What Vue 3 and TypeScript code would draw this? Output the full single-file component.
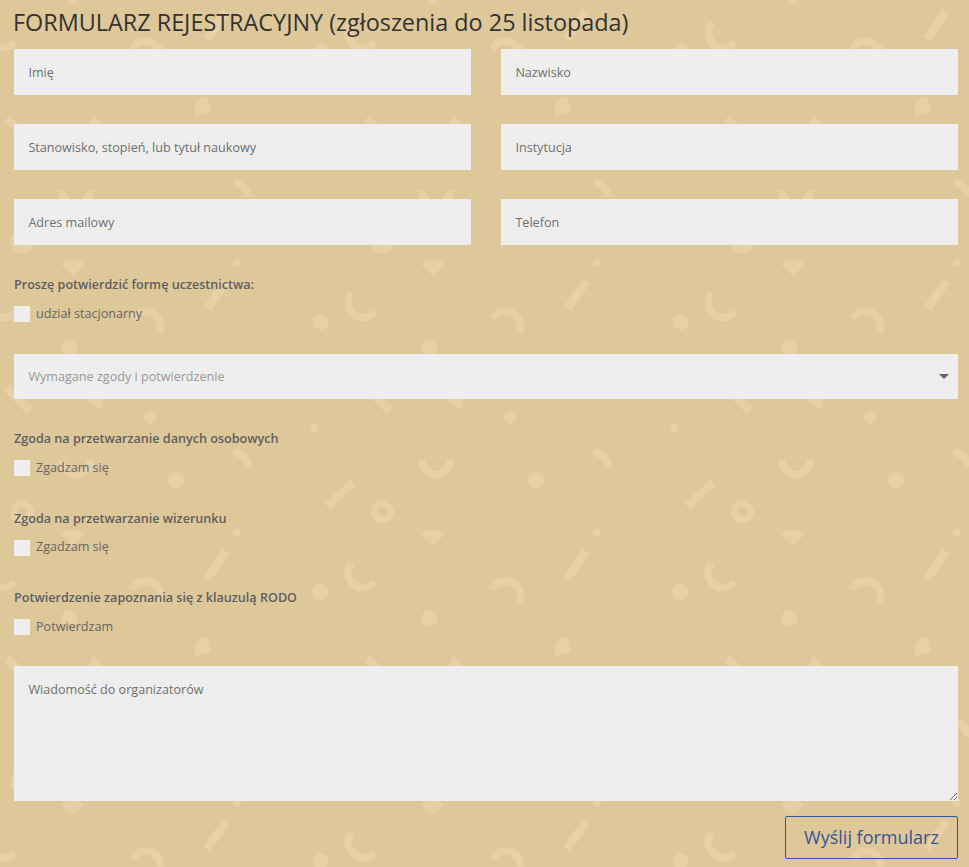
<script setup lang="ts">
const consentGroups = [
  { title: 'Zgoda na przetwarzanie danych osobowych', label: 'Zgadzam się' },
  { title: 'Zgoda na przetwarzanie wizerunku', label: 'Zgadzam się' },
  { title: 'Potwierdzenie zapoznania się z klauzulą RODO', label: 'Potwierdzam' },
]
const fields: string[] = ['Imię', 'Nazwisko', 'Stanowisko, stopień, lub tytuł naukowy', 'Instytucja', 'Adres mailowy', 'Telefon']
</script>

<template>
  <div class="page">
    <svg class="pattern" width="969" height="867" aria-hidden="true">
      <defs>
        <pattern id="confetti" patternUnits="userSpaceOnUse" width="360" height="270" patternTransform="translate(280 258)">
          <g transform="translate(-280 -258)" fill="#e8cfa5" stroke="none">
            <circle cx="596.7" cy="262.7" r="4" />
            <path d="M421.5 264.5 A17 17 0 0 1 444.5 264.5 L433 276 Z" />
            <circle cx="320.7" cy="321.7" r="8" />
            <circle cx="429.3" cy="348.3" r="8" />
            <circle cx="510" cy="417.7" r="6" />
            <circle cx="314" cy="428" r="4.3" />
            <circle cx="536" cy="480.7" r="8" />
            <path d="M571 381.7 L555 386 A16.6 16.6 0 0 1 566.7 366 Z" />
            <path d="M446 401 L453 386 A16.7 16.7 0 0 1 461 409 Z" />
            <g fill="none" stroke="#e8cfa5" stroke-width="7.5">
              <path d="M586 281.5 L567 309" stroke-width="8.5" />
              <path d="M492.5 319 A14.5 14.5 0 0 1 519 333" />
              <path d="M351.5 293 A14.5 14.5 0 0 0 375 312" />
              <path d="M367 388 L390 411" stroke-width="8.5" />
              <path d="M593.3 452.5 A14.5 14.5 0 0 1 608 467" />
              <path d="M421.5 460.5 A14.5 14.5 0 0 0 450.5 459.5" />
              <path d="M353 482.5 L327.5 506.5" stroke-width="8.5" />
              <circle cx="382.3" cy="511.7" r="8.2" stroke-width="7" />
            </g>
          </g>
        </pattern>
      </defs>
      <rect width="969" height="867" fill="url(#confetti)" />
    </svg>

    <form class="form" @submit.prevent>
      <h1 class="title">FORMULARZ REJESTRACYJNY (zgłoszenia do 25 listopada)</h1>

      <div class="fields">
        <input v-for="field in fields" :key="field" class="control" type="text" :placeholder="field" />
      </div>

      <section class="group first">
        <p class="group-title">Proszę potwierdzić formę uczestnictwa:</p>
        <label class="check"><input type="checkbox" /><span>udział stacjonarny</span></label>
      </section>

      <div class="select-wrap">
        <select class="control select">
          <option>Wymagane zgody i potwierdzenie</option>
        </select>
        <span class="arrow"></span>
      </div>

      <section v-for="group in consentGroups" :key="group.title" class="group">
        <p class="group-title">{{ group.title }}</p>
        <label class="check"><input type="checkbox" /><span>{{ group.label }}</span></label>
      </section>

      <textarea class="control message" placeholder="Wiadomość do organizatorów"></textarea>

      <div class="actions">
        <button class="submit" type="submit">Wyślij formularz</button>
      </div>
    </form>
  </div>
</template>

<style scoped>
.page {
  position: relative;
  width: 969px;
  height: 867px;
  overflow: hidden;
  background: #dec89a;
  font-family: "Open Sans", sans-serif;
}
.pattern {
  position: absolute;
  top: 0;
  left: 0;
}
.form {
  position: relative;
  box-sizing: border-box;
  padding: 7px 11px 0 14px;
}
.title {
  margin: 0 0 12px -1px;
  font-size: 23.4px;
  font-weight: 400;
  line-height: 30px;
  color: #333333;
}
.fields {
  display: grid;
  grid-template-columns: 457px 457px;
  column-gap: 30px;
  row-gap: 29px;
}
.control {
  display: block;
  box-sizing: border-box;
  width: 100%;
  height: 46px;
  margin: 0;
  padding: 0 14.4px;
  border: 0;
  border-radius: 0;
  outline: 0;
  background: #eeeeee;
  font-family: "Open Sans", sans-serif;
  font-size: 12.6px;
  color: #666666;
}
.control::placeholder {
  color: #6f6f6f;
  opacity: 1;
}
.group {
  height: 79.5px;
}
.group.first {
  height: 79px;
  margin-top: 30px;
}
.group-title {
  margin: 0 0 11px;
  padding-top: 1px;
  font-size: 12.6px;
  font-weight: 600;
  line-height: 18px;
  color: #5f5f5f;
}
.check {
  display: flex;
  align-items: center;
  gap: 6px;
  height: 18px;
  font-size: 12.6px;
  line-height: 18px;
  color: #666666;
}
.check span {
  margin-top: -1px;
}
.check input {
  appearance: none;
  flex: none;
  width: 16px;
  height: 16px;
  margin: 0;
  border-radius: 0;
  background: #eeeeee;
}
.select-wrap {
  position: relative;
  margin-bottom: 30px;
}
.select {
  appearance: none;
  height: 45px;
  color: #999999;
}
.arrow {
  position: absolute;
  top: 20px;
  right: 9px;
  width: 0;
  height: 0;
  border-top: 5px solid #666666;
  border-left: 5px solid transparent;
  border-right: 5px solid transparent;
}
.message {
  height: 135px;
  margin-top: -2px;
  padding: 15px 14.4px;
  line-height: 18px;
  resize: vertical;
}
.actions {
  display: flex;
  justify-content: flex-end;
  margin-top: 15px;
}
.submit {
  box-sizing: border-box;
  width: 173px;
  height: 43px;
  padding: 0;
  border: 1px solid #2a5ba8;
  border-radius: 2px;
  background: transparent;
  font-family: "Open Sans", sans-serif;
  font-size: 18px;
  color: #35559a;
}
</style>
